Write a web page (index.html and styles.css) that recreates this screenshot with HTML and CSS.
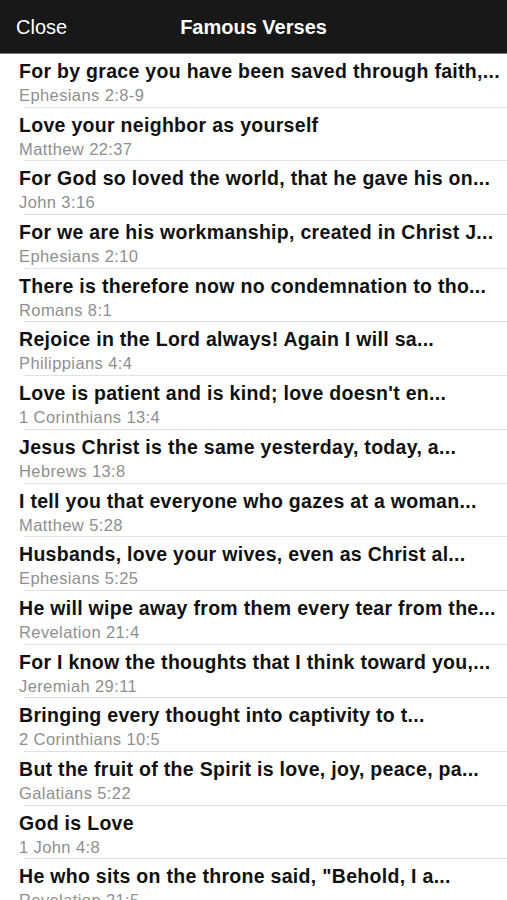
FILE: index.html
```html
<!DOCTYPE html>
<html>
<head>
<meta charset="utf-8">
<link rel="stylesheet" href="styles.css">
</head>
<body>
<div class="app">
  <header class="navbar">
    <span class="close">Close</span>
    <span class="title">Famous Verses</span>
  </header>
  <ul class="list">
    <li class="row"><div class="verse">For by grace you have been saved through faith,...</div><div class="ref">Ephesians 2:8-9</div></li>
    <li class="row"><div class="verse">Love your neighbor as yourself</div><div class="ref">Matthew 22:37</div></li>
    <li class="row"><div class="verse">For God so loved the world, that he gave his on...</div><div class="ref">John 3:16</div></li>
    <li class="row"><div class="verse">For we are his workmanship, created in Christ J...</div><div class="ref">Ephesians 2:10</div></li>
    <li class="row"><div class="verse">There is therefore now no condemnation to tho...</div><div class="ref">Romans 8:1</div></li>
    <li class="row"><div class="verse">Rejoice in the Lord always! Again I will sa...</div><div class="ref">Philippians 4:4</div></li>
    <li class="row"><div class="verse">Love is patient and is kind; love doesn't en...</div><div class="ref">1 Corinthians 13:4</div></li>
    <li class="row"><div class="verse">Jesus Christ is the same yesterday, today, a...</div><div class="ref">Hebrews 13:8</div></li>
    <li class="row"><div class="verse">I tell you that everyone who gazes at a woman...</div><div class="ref">Matthew 5:28</div></li>
    <li class="row"><div class="verse">Husbands, love your wives, even as Christ al...</div><div class="ref">Ephesians 5:25</div></li>
    <li class="row"><div class="verse">He will wipe away from them every tear from the...</div><div class="ref">Revelation 21:4</div></li>
    <li class="row"><div class="verse">For I know the thoughts that I think toward you,...</div><div class="ref">Jeremiah 29:11</div></li>
    <li class="row"><div class="verse">Bringing every thought into captivity to t...</div><div class="ref">2 Corinthians 10:5</div></li>
    <li class="row"><div class="verse">But the fruit of the Spirit is love, joy, peace, pa...</div><div class="ref">Galatians 5:22</div></li>
    <li class="row"><div class="verse">God is Love</div><div class="ref">1 John 4:8</div></li>
    <li class="row"><div class="verse">He who sits on the throne said, "Behold, I a...</div><div class="ref">Revelation 21:5</div></li>
  </ul>
</div>
</body>
</html>
```
FILE: styles.css
```css
html, body {
  margin: 0;
  padding: 0;
  background: #ffffff;
}
body {
  font-family: "Liberation Sans", Arial, sans-serif;
  width: 507px;
  height: 900px;
  overflow: hidden;
}
.navbar {
  height: 53px;
  background: #181818;
  border-bottom: 1px solid #7a7a7a;
  box-sizing: content-box;
  display: flex;
  align-items: center;
  position: relative;
  color: #ffffff;
}
.close {
  padding-left: 16px;
  font-size: 20px;
  padding-top: 1px;
}
.title {
  position: absolute;
  left: 0;
  right: 0;
  text-align: center;
  font-size: 20px;
  font-weight: bold;
  padding-top: 1px;
  pointer-events: none;
}
.list {
  list-style: none;
  margin: 0;
  padding: 0;
}
.row {
  height: 53.7px;
  box-sizing: border-box;
  padding-left: 19px;
  padding-top: 5px;
  position: relative;
  white-space: nowrap;
  overflow: hidden;
}
.row::after {
  content: "";
  position: absolute;
  left: 24px;
  right: 0;
  bottom: 0;
  height: 1px;
  background: #e2e2e2;
}
.verse {
  font-size: 19.5px;
  letter-spacing: 0.3px;
  font-weight: bold;
  color: #111111;
  line-height: 24px;
}
.ref {
  font-size: 16.5px;
  letter-spacing: 0.4px;
  color: #8f8f8f;
  line-height: 20px;
  margin-top: 2px;
}
```
